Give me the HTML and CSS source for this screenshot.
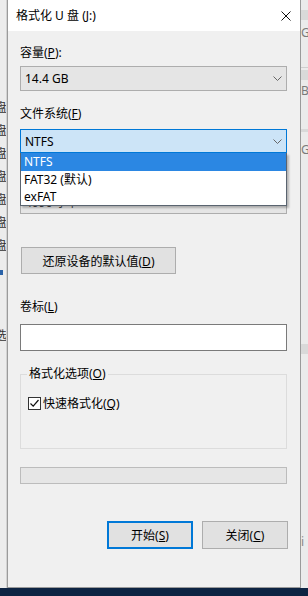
FILE: index.html
```html
<!DOCTYPE html>
<html lang="zh-CN">
<head>
    <meta charset="UTF-8">
    <meta name="viewport" content="width=device-width, initial-scale=1.0">
    <title>格式化 U 盘 (J:)</title>
    <link rel="stylesheet" href="styles.css">
</head>
<body>
    <div class="screen">
        <div class="desk">
            <div class="side-left">
                <div class="peek-list">
                    <div>盘</div><div>盘</div><div>盘</div><div>盘</div><div>盘</div><div>盘</div><div>盘</div>
                </div>
                <div class="peek-dot"></div>
                <div class="peek-word">选</div>
            </div>

            <div class="window">
                <div class="titlebar">
                    <span class="title">格式化 U 盘 (J:)</span>
                    <svg class="close" width="10" height="10" viewBox="0 0 10 10">
                        <path d="M0.5 0.5 L9.5 9.5 M9.5 0.5 L0.5 9.5" stroke="#111" stroke-width="1" fill="none"/>
                    </svg>
                </div>

                <div class="content">
                    <div class="label label-size">容量(<u>P</u>):</div>
                    <div class="combo combo-size">
                        <span>14.4 GB</span>
                        <svg class="chevron" width="9" height="5" viewBox="0 0 9 5"><path d="M0.5 0.5 L4.5 4.5 L8.5 0.5" fill="none" stroke="#666"/></svg>
                    </div>

                    <div class="label">文件系统(<u>F</u>)</div>
                    <div class="combo-wrap">
                        <div class="combo focus">
                            <span>NTFS</span>
                            <svg class="chevron" width="9" height="5" viewBox="0 0 9 5"><path d="M0.5 0.5 L4.5 4.5 L8.5 0.5" fill="none" stroke="#666"/></svg>
                        </div>
                        <ul class="dropdown">
                            <li class="selected">NTFS</li>
                            <li>FAT32 (默认)</li>
                            <li>exFAT</li>
                        </ul>
                    </div>

                    <!-- allocation unit row, mostly covered by the open list -->
                    <div class="label"></div>
                    <div class="combo combo-unit">
                        <span class="unit-text">4096 字节</span>
                        <svg class="chevron" width="9" height="5" viewBox="0 0 9 5"><path d="M0.5 0.5 L4.5 4.5 L8.5 0.5" fill="none" stroke="#666"/></svg>
                    </div>

                    <button class="btn restore">还原设备的默认值(<u>D</u>)</button>

                    <div class="label label-name">卷标(<u>L</u>)</div>
                    <input class="textbox" type="text">

                    <div class="group">
                        <div class="legend">格式化选项(<u>O</u>)</div>
                        <label class="check">
                            <span class="box">
                                <svg width="11" height="11" viewBox="0 0 11 11"><path d="M1.5 5.5 L4.2 8.2 L9.5 2" fill="none" stroke="#111" stroke-width="1.2"/></svg>
                            </span>
                            <span>快速格式化(<u>Q</u>)</span>
                        </label>
                    </div>

                    <div class="progress"></div>

                    <div class="actions">
                        <button class="btn default">开始(<u>S</u>)</button>
                        <button class="btn">关闭(<u>C</u>)</button>
                    </div>
                </div>
            </div>

            <div class="side-right">
                <div class="r-gap"></div>
                <div class="r-band"></div>
                <div class="r-text">G</div>
                <div class="r-band r-band2"></div>
                <div class="r-text r-text2">B</div>
                <div class="r-band r-band3"></div>
                <div class="r-text r-text3">G</div>
                <div class="r-fill"></div>
                <div class="r-band"></div>
                <div class="r-text r-text4">i</div>
            </div>
        </div>
        <div class="taskbar"></div>
    </div>
</body>
</html>
```

FILE: styles.css
```css
body {
    margin: 0;
    font-family: "Noto Sans", "Noto Sans CJK SC", sans-serif;
    font-size: 12px;
    color: #000;
    background: #0d2342;
}

.screen {
    width: 308px;
    height: 596px;
    display: flex;
    flex-direction: column;
    overflow: hidden;
}

.desk {
    display: flex;
    height: 588px;
}

.taskbar {
    flex: 1;
    background: #0d2342;
}

/* window behind, left */
.side-left {
    width: 7px;
    box-sizing: border-box;
    background: #ececec;
    border-right: 1px solid #d2d2d2;
    overflow: hidden;
    padding-top: 96px;
}

.peek-list div,
.peek-word {
    width: 14px;
    margin-left: -7px;
    text-align: right;
    line-height: 23px;
    color: #333;
}

.peek-dot {
    width: 3px;
    height: 5px;
    margin-top: 13px;
    background: #2a62a8;
}

.peek-word {
    margin-top: 49px;
}

/* window behind, right */
.side-right {
    width: 7px;
    background: #ebebeb;
    overflow: hidden;
    color: #7a7a7a;
}

.r-gap {
    height: 10px;
}

.r-band {
    height: 10px;
    background: #d9d9d9;
}

.r-text {
    height: 48px;
    line-height: 16px;
    padding-top: 5px;
    box-sizing: border-box;
    border-bottom: 1px solid #cfcfcf;
}

.r-band2 {
    margin-top: 2px;
}

.r-text2 {
    height: 49px;
    padding-top: 3px;
    border-bottom: none;
}

.r-band3 {
    height: 3px;
}

.r-text3 {
    height: 30px;
    padding-top: 10px;
    border-bottom: none;
}

.r-fill {
    height: 182px;
}

.r-text4 {
    height: 60px;
    padding-top: 180px;
    border-bottom: none;
    color: #888;
}

/* dialog */
.window {
    width: 294px;
    height: 588px;
    box-sizing: border-box;
    border: 1px solid #9a9a9a;
    border-top: none;
    background: #f0f0f0;
    display: flex;
    flex-direction: column;
}

.titlebar {
    height: 31px;
    flex-shrink: 0;
    background: #fff;
    display: flex;
    align-items: center;
    justify-content: space-between;
    padding: 0 9px 0 8px;
}

.title {
    line-height: 16px;
}

.content {
    padding: 0 13px 0 12px;
}

.label {
    height: 16px;
    line-height: 16px;
    margin-top: 15px;
}

.label-size {
    margin-top: 14px;
}

.label-name {
    margin-top: 25px;
}

.combo {
    height: 25px;
    box-sizing: border-box;
    border: 1px solid #adadad;
    background: #e5e5e5;
    display: flex;
    align-items: center;
    justify-content: space-between;
    padding: 0 4px;
}

.combo-size {
    margin-top: 5px;
}

.combo-wrap {
    position: relative;
    margin-top: 7px;
}

.combo.focus {
    height: 24px;
    background: #cce4f7;
    border-color: #0078d7;
}

.combo-unit {
    height: 24px;
    margin-top: 6px;
}

.unit-text {
    color: #444;
}

.dropdown {
    position: absolute;
    left: 0;
    right: 0;
    top: 100%;
    z-index: 2;
    margin: 0;
    padding: 0;
    list-style: none;
    background: #fff;
    border: 1px solid #5a6470;
    border-top: none;
    box-shadow: 2px 2px 2px rgba(0, 0, 0, 0.25);
}

.dropdown li {
    height: 17px;
    line-height: 17px;
    padding-left: 3px;
}

.dropdown li.selected {
    height: 18px;
    line-height: 18px;
    background: #2b87e3;
    color: #fff;
}

.btn {
    font: inherit;
    color: #000;
    background: #e1e1e1;
    border: 1px solid #adadad;
    padding: 0;
    box-sizing: border-box;
}

.restore {
    display: block;
    width: 155px;
    height: 27px;
    margin: 33px 0 0 1px;
}

.textbox {
    display: block;
    width: 100%;
    height: 27px;
    box-sizing: border-box;
    margin: 9px 0 0;
    border: 1px solid #7a7a7a;
    background: #fff;
    outline: none;
}

.group {
    height: 75px;
    box-sizing: border-box;
    margin-top: 23px;
    border: 1px solid #dcdcdc;
}

.legend {
    width: max-content;
    margin: -9px 0 0 6px;
    padding: 0 2px;
    line-height: 16px;
    background: #f0f0f0;
}

.check {
    display: flex;
    align-items: center;
    gap: 2px;
    margin: 15px 0 0 7px;
    line-height: 13px;
}

.box {
    width: 13px;
    height: 13px;
    box-sizing: border-box;
    border: 1px solid #333;
    background: #fff;
    display: flex;
    align-items: center;
    justify-content: center;
}

.progress {
    height: 17px;
    box-sizing: border-box;
    margin-top: 18px;
    background: #e6e6e6;
    border: 1px solid #bcbcbc;
}

.actions {
    display: flex;
    justify-content: flex-end;
    gap: 9px;
    margin: 37px -1px 0 0;
}

.actions .btn {
    width: 86px;
    height: 28px;
}

.btn.default {
    border: 2px solid #0078d7;
}
```
